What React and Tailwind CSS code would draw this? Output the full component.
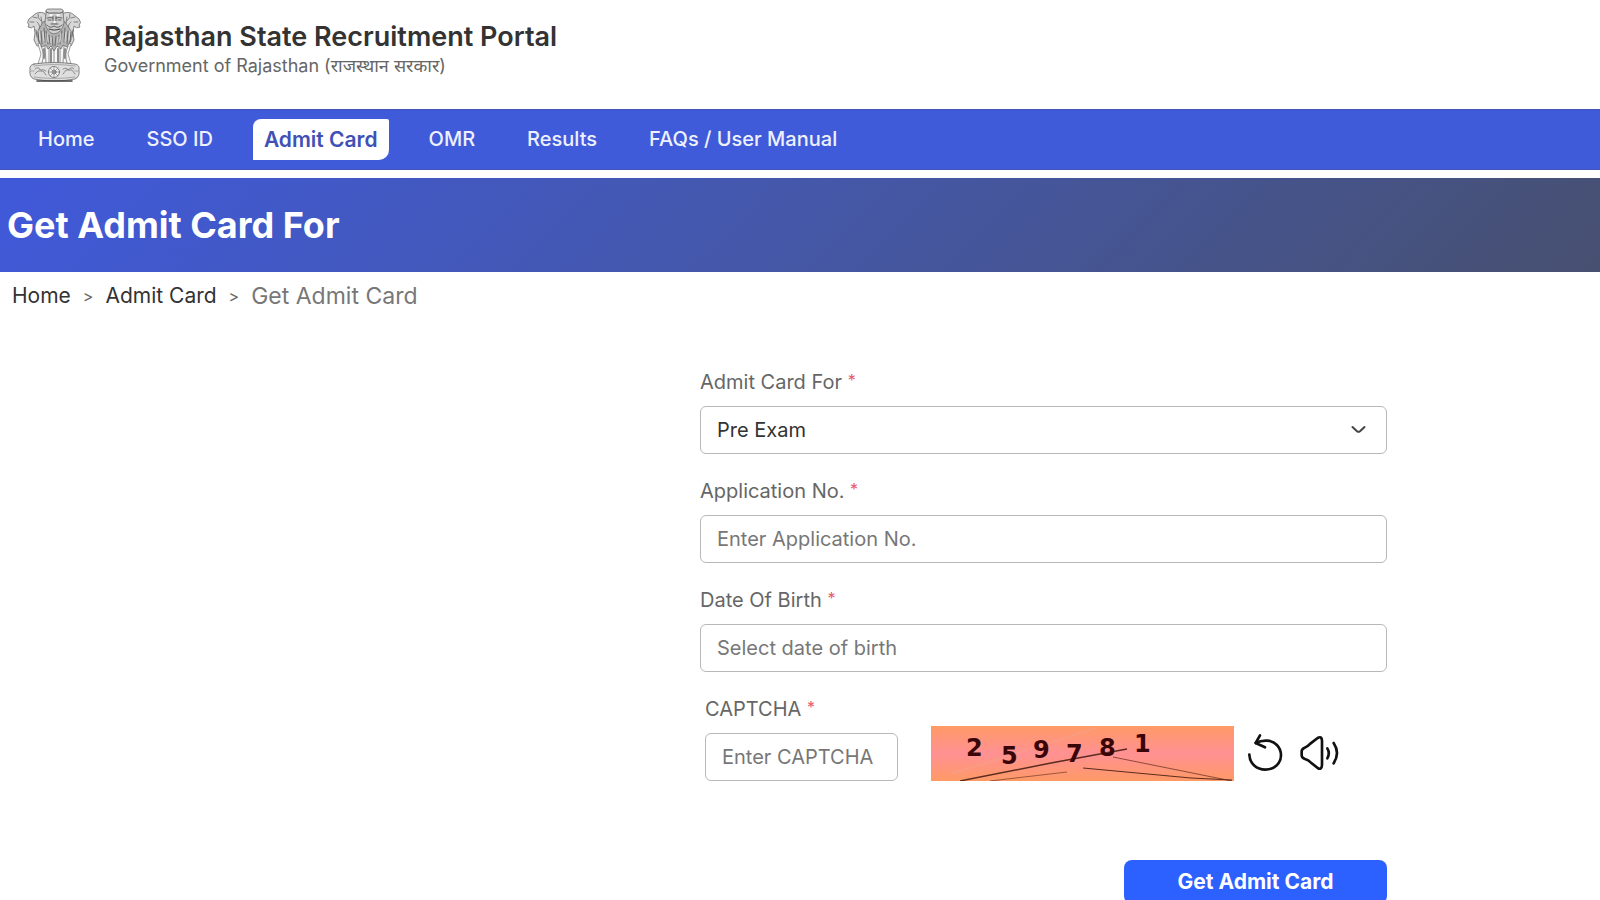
// src/App.jsx
import React from 'react';

const NAV_ITEMS = ['Home', 'SSO ID', 'Admit Card', 'OMR', 'Results', 'FAQs / User Manual'];

const CAPTCHA_DIGITS = [
  { value: '2', x: 35, y: 30 },
  { value: '5', x: 70, y: 38 },
  { value: '9', x: 102, y: 32 },
  { value: '7', x: 135, y: 36 },
  { value: '8', x: 168, y: 30 },
  { value: '1', x: 203, y: 26 },
];

export default function App() {
  return (
    <div className="min-h-screen bg-white font-['Inter','Noto_Sans',sans-serif] text-gray-800">
      {/* Header */}
      <header className="flex h-[109px] items-start gap-[21px] px-[26px] pt-2">
        <Emblem />
        <div className="pt-3">
          <h1 className="text-[27px] leading-[34px] font-semibold text-[#333]">
            Rajasthan State Recruitment Portal
          </h1>
          <p className="text-lg leading-[23px] text-[#666]">
            Government of Rajasthan (राजस्थान सरकार)
          </p>
        </div>
      </header>

      {/* Main navigation */}
      <nav className="flex h-[61px] items-center gap-7 border-y border-[#4454b4] bg-[#3f5bd9] px-[26px]">
        {NAV_ITEMS.map((item) => (
          <NavItem key={item} label={item} active={item === 'Admit Card'} />
        ))}
      </nav>

      {/* Page title */}
      <section className="mt-2 flex h-[94px] items-center bg-linear-[135deg,#4059da_0%,#4458ad_45%,#475070_100%] px-[7px]">
        <h2 className="text-[36px] leading-10 font-bold text-white">Get Admit Card For</h2>
      </section>

      <ol className="flex items-center gap-3 px-3 pt-3 text-[21px] leading-6 text-[#333]">
        <li><a href="#home">Home</a></li>
        <li className="text-base text-[#666]">&gt;</li>
        <li><a href="#admit-card">Admit Card</a></li>
        <li className="text-base text-[#666]">&gt;</li>
        <li className="text-[23px] text-[#777]">Get Admit Card</li>
      </ol>

      {/* Admit card form */}
      <main className="grid grid-cols-[700fr_687fr_213fr] pt-[62px]">
        <form className="col-start-2 flex flex-col gap-[25px]">
          <div>
            <FieldLabel id="exam">Admit Card For</FieldLabel>
            <div className="relative mt-3">
              <select
                id="exam"
                className="h-12 w-full appearance-none rounded-md border border-[#b8b8b8] bg-white px-4 text-xl text-[#333]"
              >
                <option>Pre Exam</option>
              </select>
              <svg
                className="pointer-events-none absolute top-4 right-5 h-4 w-4"
                viewBox="0 0 16 16"
                fill="none"
                stroke="#444"
                strokeWidth="2"
                strokeLinecap="round"
                strokeLinejoin="round"
              >
                <path d="M1.5 5 L6 9.2 Q7.5 10.4 9 9.2 L13.5 5" />
              </svg>
            </div>
          </div>

          <TextField id="application" label="Application No." placeholder="Enter Application No." />
          <TextField id="dob" label="Date Of Birth" placeholder="Select date of birth" />

          <div className="flex items-end pl-[5px]">
            <div className="w-[193px]">
              <TextField id="captcha" label="CAPTCHA" placeholder="Enter CAPTCHA" />
            </div>
            <Captcha />
            <button type="button" aria-label="Refresh captcha" className="ml-[11px] pb-2">
              <RefreshIcon />
            </button>
            <button type="button" aria-label="Play captcha" className="ml-3 pb-2">
              <SpeakerIcon />
            </button>
          </div>

          <button
            type="submit"
            className="mt-[54px] h-11 w-[263px] self-end rounded-lg bg-[#2c60ff] text-[21px] font-bold text-white"
          >
            Get Admit Card
          </button>
        </form>
      </main>
    </div>
  );
}

function NavItem({ label, active }) {
  return (
    <a
      href="#"
      className={
        active
          ? 'rounded-tl-lg rounded-tr-xs rounded-br-[10px] bg-white px-[11px] py-2 text-[21px] leading-[25px] font-semibold text-[#3f51b5]'
          : 'px-3 py-2 text-xl leading-[25px] font-medium text-[#eef0ff]'
      }
    >
      {label}
    </a>
  );
}

function FieldLabel({ id, children }) {
  return (
    <label htmlFor={id} className="block text-xl leading-6 text-[#666]">
      {children} <span className="align-top text-base leading-5 text-[#e8596b]">*</span>
    </label>
  );
}

function TextField({ id, label, placeholder }) {
  return (
    <div>
      <FieldLabel id={id}>{label}</FieldLabel>
      <input
        id={id}
        type="text"
        placeholder={placeholder}
        className="mt-3 block h-12 w-full rounded-md border border-[#b8b8b8] px-4 text-xl text-[#333] placeholder:text-[#777]"
      />
    </div>
  );
}

function Captcha() {
  return (
    <svg className="ml-[33px] h-[55px] w-[303px]" viewBox="0 0 303 55">
      <defs>
        <linearGradient id="captchaFill" x1="0" y1="0" x2="0" y2="1">
          <stop offset="0" stopColor="#ff9a66" />
          <stop offset="0.5" stopColor="#ff9193" />
          <stop offset="1" stopColor="#ff9a66" />
        </linearGradient>
      </defs>
      <rect width="303" height="55" fill="url(#captchaFill)" />
      <path d="M20 48 L165 2" stroke="#f4a08c" strokeWidth="1" />
      <g fill="none" stroke="#5c2a20" strokeWidth="1">
        <path d="M29 55 L120 37 L196 23" strokeWidth="1.4" />
        <path d="M59 55 L136 46" opacity="0.6" />
        <path d="M152 42 L260 52 L301 54" />
        <path d="M182 31 L301 55" opacity="0.7" />
      </g>
      <g fill="#3a0508" fontFamily="DejaVu Sans" fontWeight="700" fontSize="24">
        {CAPTCHA_DIGITS.map((d) => (
          <text key={d.value} x={d.x} y={d.y}>{d.value}</text>
        ))}
      </g>
    </svg>
  );
}

function RefreshIcon() {
  return (
    <svg width="40" height="42" viewBox="0 0 120 126" fill="none" stroke="#111" strokeWidth="8" strokeLinecap="round" strokeLinejoin="round">
      <path d="M13 71 C14 98 35 116 61 116 C88 116 108 97 108 73 C108 48 89 30 66 29 Q48 28 32 36" />
      <path d="M45 13 L32 36 L60 49" />
    </svg>
  );
}

function SpeakerIcon() {
  return (
    <svg width="44" height="42" viewBox="0 0 132 126" fill="none" stroke="#111" strokeWidth="8" strokeLinecap="round" strokeLinejoin="round">
      <path d="M14 60 Q15 53 23 50 Q33 46 40 38 L62 21 Q74 14 75 29 V102 Q74 118 62 111 L42 95 Q34 87 24 84 Q15 81 14 74 Z" />
      <path d="M91 52 Q100 67 91 82" />
      <path d="M110 36 Q130 66 110 97" />
    </svg>
  );
}

// Lion Capital emblem
function Emblem() {
  return (
    <svg width="57" height="76" viewBox="0 0 57 76" fill="none" stroke="#6a6a6a" strokeWidth="0.8" strokeLinecap="round" strokeLinejoin="round">
      {/* side lions */}
      <path fill="#d8d8d8" d="M18 5 Q12 3 8 7 L3 11 Q0 15 3 17 L2 19 Q6 21 8 18 L9 25 L8 32 L11 38 L19 38 L21 10 Z" />
      <path fill="#d8d8d8" d="M38 5 Q44 3 48 7 L53 11 Q56 15 53 17 L54 19 Q50 21 48 18 L47 25 L48 32 L45 38 L37 38 L35 10 Z" />
      <path d="M7 9 l4 1 M4 14 h4 M12 6 q-1 4 3 7 M11 14 q4 3 2 8 M15 9 q1 7 2 10 M49 9 l-4 1 M52 14 h-4 M44 6 q1 4 -3 7 M45 14 q-4 3 -2 8 M41 9 q-1 7 -2 10" />
      {/* legs */}
      <path fill="#f6f6f6" stroke="#8a8a8a" d="M12 36 L15 46 L12 56 H45 L42 46 L45 36 Z" />
      <path stroke="#777" d="M15 38 q4 8 1 17 M19 38 l1 17 M23 39 v16 M28 38 v17 M34 39 v16 M38 38 l-1 17 M42 38 q-4 8 -1 17" />
      <path stroke="#8c8c8c" strokeWidth="2" d="M18 41 v9 M25 41 v13 M32 41 v13 M39 41 v9" />
      {/* front lion mane */}
      <path fill="#b4b4b4" d="M17 14 L12 23 L12 32 L16 39 L20 37 L22 41 L25 38 L28 43 L31 38 L35 41 L37 37 L41 39 L45 32 L45 23 L39 14 Z" />
      <path stroke="#565656" d="M10 22 l1 7 M12 24 l1 10 M15 23 l1 13 M18 20 l1 14 M20 23 l2 13 M23 27 l1 9 M26 28 l1 10 M30 28 l-1 10 M33 27 l-1 9 M36 23 l-2 13 M39 20 l-1 14 M42 23 l-1 13 M45 24 l-1 10 M47 22 l-1 7" />
      <path stroke="#e8e8e8" d="M13 23 l1 9 M17 24 l1 9 M21 26 l1 8 M25 29 v6 M32 29 v6 M35 26 l-1 8 M40 24 l-1 9 M44 23 l-1 9" />
      {/* front lion face */}
      <path fill="#d0d0d0" d="M20 4 Q19 1 23 1 H34 Q38 1 37 4 L38 15 Q36 25 28 26 Q21 25 19 15 Z" />
      <path stroke="#444" d="M20 4 q3 2 7 1 h3 q4 1 7 -1 M21 10 q3 -1 6 0 M30 10 q3 -1 6 0 M22 12 h3 M32 12 h3 M27 8 v7 M30 8 v7 M25 16 h7 M21 17 q3 4 7 1 q4 3 8 -1" />
      <path stroke="#444" strokeWidth="1.2" d="M23 21 q5 2 11 0" />
      <path stroke="#fff" strokeWidth="1.6" d="M24 7 h2 M31 7 h2 M27 14 h3" />
      {/* abacus */}
      <path fill="#dedede" d="M8 56 Q28 53 49 56 Q54 57 53 62 Q54 69 49 71 Q28 75 8 71 Q3 69 4 62 Q3 57 8 56 Z" />
      <path stroke="#999" d="M8 58 Q28 55 49 58 M8 69 Q28 72 49 69 M5 63 h3 M49 63 h3" />
      <path stroke="#777" d="M9 61 q4 -3 5 1 q4 -1 6 1 M9 66 l3 -3 l5 0 l3 4 M37 66 l3 -4 l6 0 l3 4 M37 61 q4 -2 5 1 q4 -4 6 -1" />
      <circle cx="28" cy="64" r="5.5" fill="#efefef" />
      <circle cx="28" cy="64" r="2" />
      <path strokeWidth="0.5" d="M28 58.5 v11 M22.5 64 h11 M24 60 l8 8 M32 60 l-8 8" />
      <path stroke="#444" strokeWidth="1.6" d="M11 73 H46" />
    </svg>
  );
}
